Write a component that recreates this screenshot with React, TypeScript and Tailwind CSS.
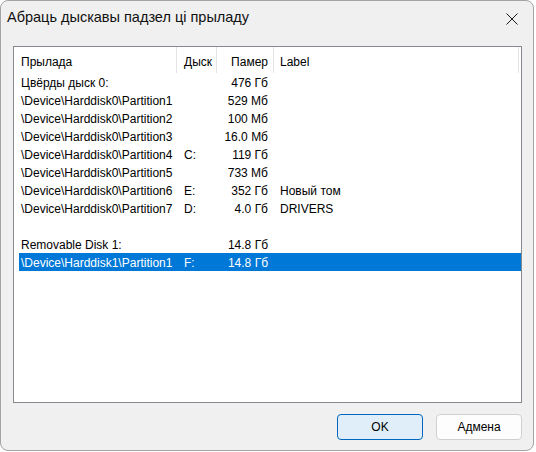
import React from 'react';

const ROWS = [
  { name: 'Цвёрды дыск 0:', drive: '', size: '476 Гб', label: '' },
  { name: '\\Device\\Harddisk0\\Partition1', drive: '', size: '529 Мб', label: '' },
  { name: '\\Device\\Harddisk0\\Partition2', drive: '', size: '100 Мб', label: '' },
  { name: '\\Device\\Harddisk0\\Partition3', drive: '', size: '16.0 Мб', label: '' },
  { name: '\\Device\\Harddisk0\\Partition4', drive: 'C:', size: '119 Гб', label: '' },
  { name: '\\Device\\Harddisk0\\Partition5', drive: '', size: '733 Мб', label: '' },
  { name: '\\Device\\Harddisk0\\Partition6', drive: 'E:', size: '352 Гб', label: 'Новый том' },
  { name: '\\Device\\Harddisk0\\Partition7', drive: 'D:', size: '4.0 Гб', label: 'DRIVERS' },
  { name: '', drive: '', size: '', label: '' },
  { name: 'Removable Disk 1:', drive: '', size: '14.8 Гб', label: '' },
  { name: '\\Device\\Harddisk1\\Partition1', drive: 'F:', size: '14.8 Гб', label: '', selected: true },
];

export default function App() {
  return (
    <div className="w-[536px] h-[452px] bg-white font-['Liberation_Sans',sans-serif]">
      <div className="w-[534px] h-[451px] rounded-[8px] border border-[#a3a3a3] bg-[#f0f0f0] flex flex-col overflow-hidden">
        {/* title bar */}
        <div className="h-[34px] flex items-center justify-between pl-[6px] pr-[15px]">
          <span className="text-[14.5px] text-[#111] leading-none pb-[1px]">Абраць дыскавы падзел ці прыладу</span>
          <svg width="12" height="12" viewBox="0 0 12 12" className="mt-[1px]">
            <path d="M0.5 0.5 L11.5 11.5 M11.5 0.5 L0.5 11.5" stroke="#1a1a1a" strokeWidth="1" fill="none" />
          </svg>
        </div>

        {/* list */}
        <div className="ml-[12px] mr-[11px] mt-[11px] h-[357px] border border-[#868a90] bg-white text-[12px] text-black leading-none">
          <div className="grid grid-cols-[163px_40px_57px_245px] h-[26px]">
            <div className="border-r border-[#e5e5e5] pl-[7px] flex items-center pt-[4px]">Прылада</div>
            <div className="border-r border-[#e5e5e5] pl-[7px] flex items-center pt-[4px]">Дыск</div>
            <div className="border-r border-[#e5e5e5] pr-[5px] flex items-center justify-end pt-[4px]">Памер</div>
            <div className="border-r border-[#e5e5e5] pl-[6px] flex items-center pt-[4px]">Label</div>
          </div>
          <div className="flex flex-col">
            {ROWS.map((r, i) => (
              <div
                key={i}
                className={`grid grid-cols-[158px_40px_57px_246px] h-[18px] ml-[5px] items-center pt-[1px] ${
                  r.selected ? 'bg-[#0078d7] text-white' : ''
                }`}
              >
                <div className="pl-[2px] whitespace-nowrap">{r.name}</div>
                <div className="pl-[7px]">{r.drive}</div>
                <div className="pr-[6px] text-right whitespace-nowrap">{r.size}</div>
                <div className="pl-[6px] whitespace-nowrap">{r.label}</div>
              </div>
            ))}
          </div>
        </div>

        {/* buttons */}
        <div className="flex justify-end gap-[13px] pr-[11px] mt-[11px]">
          <button className="w-[86px] h-[26px] rounded-[4px] border border-[#0067c0] bg-[#e0eef9] text-[12px] text-black">
            OK
          </button>
          <button className="w-[86px] h-[26px] rounded-[4px] border border-[#d0d0d0] bg-[#fdfdfd] text-[12px] text-black">
            Адмена
          </button>
        </div>
      </div>
    </div>
  );
}
